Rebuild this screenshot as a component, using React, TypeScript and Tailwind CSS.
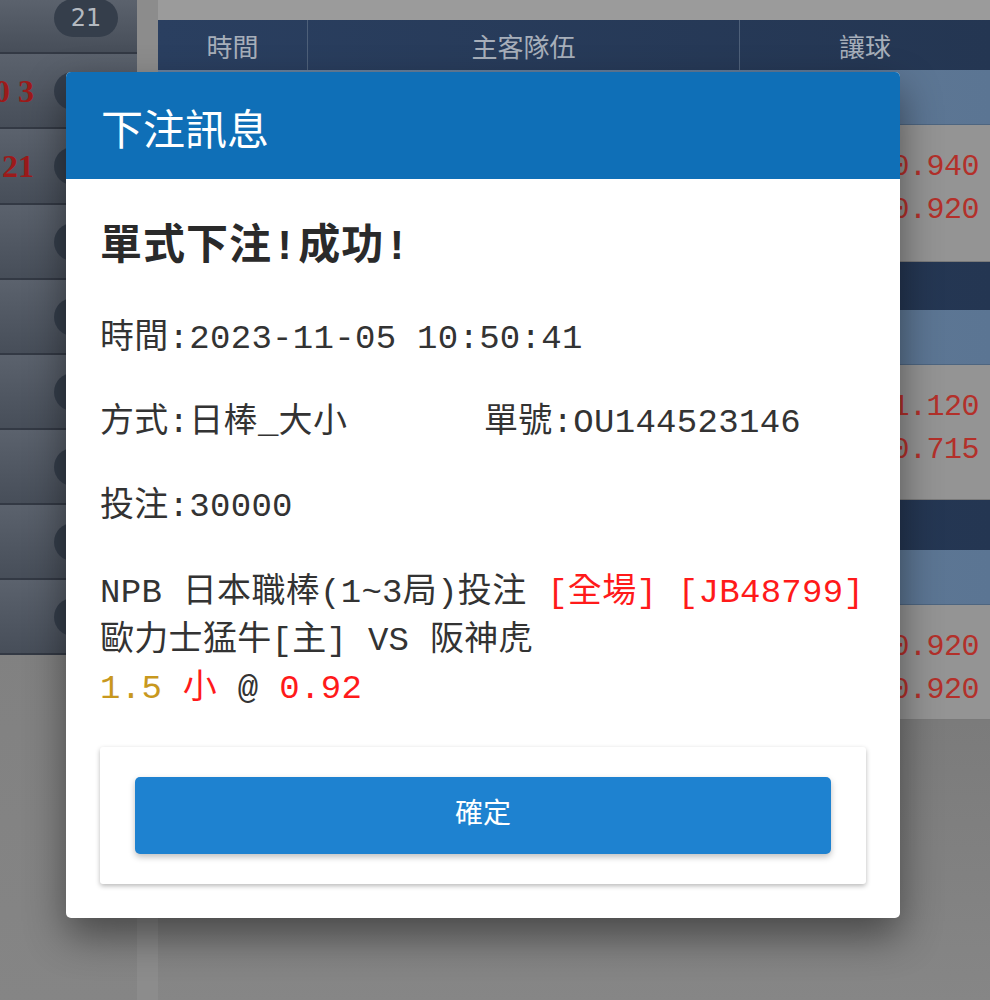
import React from "react";

const mono = { fontFamily: '"Liberation Mono", "Noto Sans CJK TC", monospace' };

function SideRow({ h, red, pill, top }: { h: string; red?: string; pill?: string; top?: boolean }) {
  return (
    <div className={`${h} relative flex items-center border-b-2 border-[#333944] bg-gradient-to-b from-[#5b626d] to-[#474e59]`}>
      <div className="flex w-[34px] justify-end overflow-hidden whitespace-nowrap font-['Liberation_Serif',serif] text-[32px] font-bold text-[#9c1a1a]">
        {red}
      </div>
      <div
        className={`absolute left-[54px] flex h-[38px] w-[64px] items-center justify-center rounded-full bg-[#353e4b] font-['DejaVu_Sans',sans-serif] text-[24px] text-[#b4b9c0] ${top ? "top-[-1px]" : ""}`}
      >
        {pill}
      </div>
    </div>
  );
}

function OddsBlock({ h, a, b }: { h: string; a: string; b: string }) {
  return (
    <div
      className={`${h} flex flex-col items-end justify-start gap-[10px] border-b border-[#7a7a7a] bg-[#949494] pr-[11px] pt-[26px] text-[30px] leading-[33px] tracking-[-0.5px] text-[#b3302a]`}
      style={mono}
    >
      <span>{a}</span>
      <span>{b}</span>
    </div>
  );
}

function Navy({ h, cols }: { h: string; cols?: boolean }) {
  return (
    <div className={`${h} flex bg-gradient-to-r from-[#2a3f60] to-[#243652] font-['Noto_Sans_CJK_TC',sans-serif] text-[26px] text-[#a7afba]`}>
      <div className={`flex w-[150px] items-center justify-center ${cols ? "border-r border-[#4e6079]" : ""}`}>{cols ? "時間" : ""}</div>
      <div className={`flex w-[432px] items-center justify-center ${cols ? "border-r border-[#4e6079]" : ""}`}>{cols ? "主客隊伍" : ""}</div>
      <div className="flex flex-1 items-center justify-center">讓球</div>
    </div>
  );
}

function LightBlue({ h }: { h: string }) {
  return <div className={`${h} border-b border-[#4d6580] bg-gradient-to-r from-[#6a819c] to-[#5b7593]`} />;
}

export default function App() {
  return (
    <div className="relative h-[1000px] w-[990px] overflow-hidden bg-[#7e7e7e]">
      {/* dimmed page behind */}
      <div className="flex h-full">
        <div className="flex w-[137px] flex-col bg-gradient-to-b from-[#7a7a7a] to-[#858585]">
          <SideRow h="h-[54px]" pill="21" top />
          <SideRow h="h-[75px]" red="0 3" />
          <SideRow h="h-[76px]" red="21" />
          <SideRow h="h-[75px]" />
          <SideRow h="h-[75px]" />
          <SideRow h="h-[75px]" />
          <SideRow h="h-[75px]" />
          <SideRow h="h-[75px]" />
          <SideRow h="h-[75px]" />
        </div>
        <div className="w-[21px] bg-[#8c8c8c]" />
        <div className="flex flex-1 flex-col">
          <div className="h-[20px] bg-[#9b9b9b]" />
          <Navy h="h-[50px]" cols />
          <LightBlue h="h-[55px]" />
          <OddsBlock h="h-[137px]" a="0.940" b="0.920" />
          <Navy h="h-[48px]" />
          <LightBlue h="h-[55px]" />
          <OddsBlock h="h-[135px]" a="1.120" b="0.715" />
          <Navy h="h-[50px]" />
          <LightBlue h="h-[55px]" />
          <OddsBlock h="h-[115px]" a="0.920" b="0.920" />
          <div className="flex-1 bg-gradient-to-b from-[#7b7b7b] to-[#868686]" />
        </div>
      </div>

      {/* modal */}
      <div className="absolute left-[66px] top-[72px] w-[834px] overflow-hidden rounded-[5px] bg-white shadow-[0_18px_40px_rgba(0,0,0,0.45)]">
        <div className="flex h-[107px] items-center bg-[#0f6fb7] pl-[35px] pt-[2px] font-['Noto_Sans_CJK_TC',sans-serif] text-[42px] text-white">
          下注訊息
        </div>
        <div className="px-[34px] pb-[34px] pt-[45px] tracking-[0.3px] text-[#333333]" style={mono}>
          <div className="text-[42px] font-bold leading-[48px] tracking-[1px] text-[#2a2a2a]">單式下注!成功!</div>
          <div className="mt-[43px] text-[34px] leading-[48px]">時間:2023-11-05 10:50:41</div>
          <div className="mt-[36px] flex text-[34px] leading-[48px]">
            <span className="w-[384px]">方式:日棒_大小</span>
            <span>單號:OU144523146</span>
          </div>
          <div className="mt-[36px] text-[34px] leading-[48px]">投注:30000</div>
          <div className="mt-[38px] text-[34px] leading-[48px]">
            <div>
              NPB 日本職棒(1~3局)投注 <span className="text-[#ff1a1a]">[全場] [JB48799]</span>
            </div>
            <div>歐力士猛牛[主] VS 阪神虎</div>
            <div>
              <span className="text-[#c8981e]">1.5</span> <span className="text-[#ff1a1a]">小</span> @{" "}
              <span className="text-[#ff1a1a]">0.92</span>
            </div>
          </div>
          <div className="mt-[34px] rounded-[3px] bg-white px-[35px] py-[30px] shadow-[0_2px_5px_rgba(0,0,0,0.28)]">
            <button className="flex h-[77px] w-full items-center justify-center rounded-[5px] bg-[#1e82d0] pb-[10px] font-['Noto_Sans_CJK_TC',sans-serif] text-[28px] tracking-normal text-white shadow-[0_3px_6px_rgba(0,0,0,0.25)]">
              確定
            </button>
          </div>
        </div>
      </div>
    </div>
  );
}
